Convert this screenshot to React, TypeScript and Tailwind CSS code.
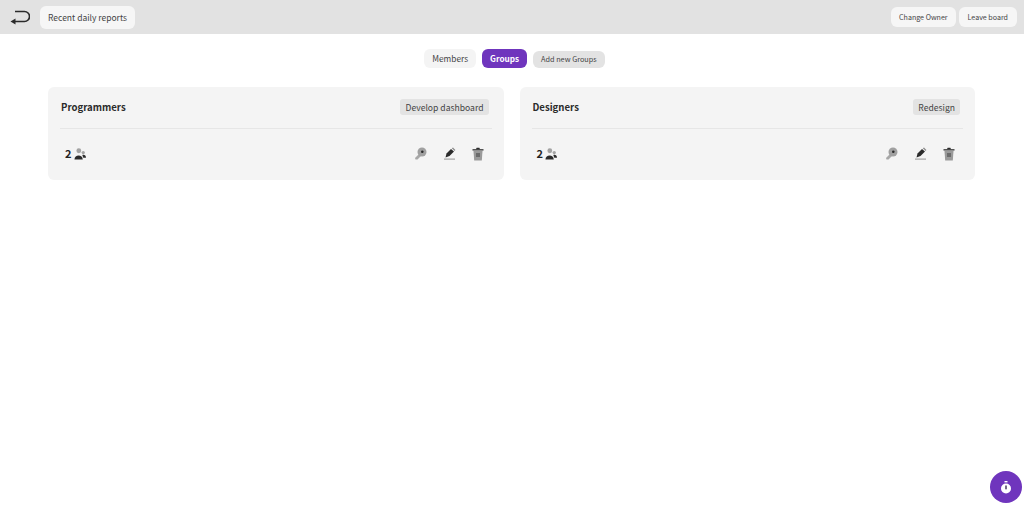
const font = "font-['Noto_Sans_CJK_SC','Noto_Sans',sans-serif]";

function BackIcon() {
  return (
    <svg width="20" height="15" viewBox="0 0 20 15" fill="none" className="text-[#2b2b2b]">
      <path d="M5 1.5h9.5a5 5 0 0 1 0 10H4" stroke="currentColor" strokeWidth="1.6" />
      <path d="M0.5 11.5 L5.5 8.5 V14.5 Z" fill="currentColor" />
    </svg>
  );
}

function PeopleIcon() {
  return (
    <svg width="12" height="12" viewBox="0 0 13 13">
      <circle cx="5.2" cy="3" r="2.6" fill="#a3a3a3" />
      <circle cx="10" cy="5" r="1.8" fill="#a3a3a3" />
      <path d="M0.5 12.5c0-6 9-6 9 0z" fill="#2b2b2b" />
      <path d="M9 7.5c2-1 4 .5 4 3h-3z" fill="#2b2b2b" />
    </svg>
  );
}

function KeyIcon() {
  return (
    <svg width="13" height="13" viewBox="0 0 13 13">
      <path d="M5 7 L1 11 L1.5 12.5 L3.5 12.5 L7 9z" fill="#a8a8a8" />
      <circle cx="8" cy="5" r="4.5" fill="#a0a0a0" />
      <circle cx="8.3" cy="4.7" r="1.3" fill="#2b2b2b" />
    </svg>
  );
}

function PenIcon() {
  return (
    <svg width="13" height="13" viewBox="0 0 13 13">
      <path d="M3.5 6.5 L8 2 L11 4.5 L6.5 9 L2.5 10.5z" fill="#2b2b2b" />
      <path d="M8.8 1.2 L10 0.6 L12.4 3 L11.7 4z" fill="#8a8a8a" />
      <rect x="1" y="11.5" width="11" height="1.2" fill="#a3a3a3" />
    </svg>
  );
}

function TrashIcon() {
  return (
    <svg width="12" height="14" viewBox="0 0 12 14">
      <path d="M0.5 2.2h11v1.3h-11z" fill="#2b2b2b" />
      <path d="M4 2.2 L4.6 0.8h2.8L8 2.2z" fill="#2b2b2b" />
      <path d="M1.5 4h9L9.8 13.5H2.2z" fill="#9a9a9a" />
      <rect x="4" y="6" width="4" height="4" fill="#6b6b6b" />
    </svg>
  );
}

function TimerIcon() {
  return (
    <svg width="10" height="13" viewBox="0 0 10 13">
      <rect x="3.5" y="0" width="3" height="1.4" fill="#fff" />
      <circle cx="5" cy="7.5" r="5" fill="#fff" />
      <rect x="4.3" y="4.5" width="1.4" height="3.8" fill="#3a2a55" />
    </svg>
  );
}

function GroupCard({ name, project }: { name: string; project: string }) {
  return (
    <div className="flex-1 bg-[#f4f4f4] rounded-md px-3 h-[93px]">
      <div className="flex items-center justify-between h-[42px] border-b border-[#e6e6e6] pb-px pl-px pr-[3px]">
        <span className="text-[9.6px] font-bold text-[#2b2b2b]">{name}</span>
        <span className="bg-[#e3e3e3] rounded-[3px] px-[5px] h-4 flex items-center text-[8.6px] text-[#444]">
          {project}
        </span>
      </div>
      <div className="flex items-center justify-between h-[51px] pb-[2px] pl-[5px] pr-2">
        <div className="flex items-center gap-[2px]">
          <span className="text-[11px] font-bold text-[#222]">2</span>
          <PeopleIcon />
        </div>
        <div className="flex items-center gap-4">
          <KeyIcon />
          <PenIcon />
          <TrashIcon />
        </div>
      </div>
    </div>
  );
}

export default function App() {
  return (
    <div className={`${font} relative h-[505px] bg-white overflow-hidden`}>
      <div className="flex items-center justify-between h-[34px] bg-[#e2e2e2] pl-[10px] pr-[7px]">
        <div className="flex items-center gap-[10px]">
          <BackIcon />
          <button className="bg-[#f6f6f6] rounded-md h-[23px] px-2 text-[8.5px] text-[#444]">
            Recent daily reports
          </button>
        </div>
        <div className="flex items-center gap-[3px]">
          <button className="bg-[#f6f6f6] rounded-md h-5 px-2 text-[7.1px] text-[#444]">
            Change Owner
          </button>
          <button className="bg-[#f6f6f6] rounded-md h-5 px-[9px] text-[7.1px] text-[#444]">
            Leave board
          </button>
        </div>
      </div>

      <div className="flex items-end justify-center gap-[6px] mt-[15px] pl-[5px]">
        <button className="bg-[#f4f4f4] rounded-md h-[19px] px-2 text-[8.3px] text-[#444]">Members</button>
        <button className="bg-[#6f35bd] rounded-md h-[19px] px-2 text-[8.2px] font-bold text-white">Groups</button>
        <button className="bg-[#e3e3e3] rounded-md h-[17px] px-2 text-[7.3px] text-[#444]">Add new Groups</button>
      </div>

      <div className="flex gap-4 mt-[19px] pl-[48px] pr-[49px]">
        <GroupCard name="Programmers" project="Develop dashboard" />
        <GroupCard name="Designers" project="Redesign" />
      </div>

      <div className="absolute right-[2px] bottom-[2px] w-8 h-8 rounded-full bg-[#6f35bd] flex items-center justify-center">
        <TimerIcon />
      </div>
    </div>
  );
}
